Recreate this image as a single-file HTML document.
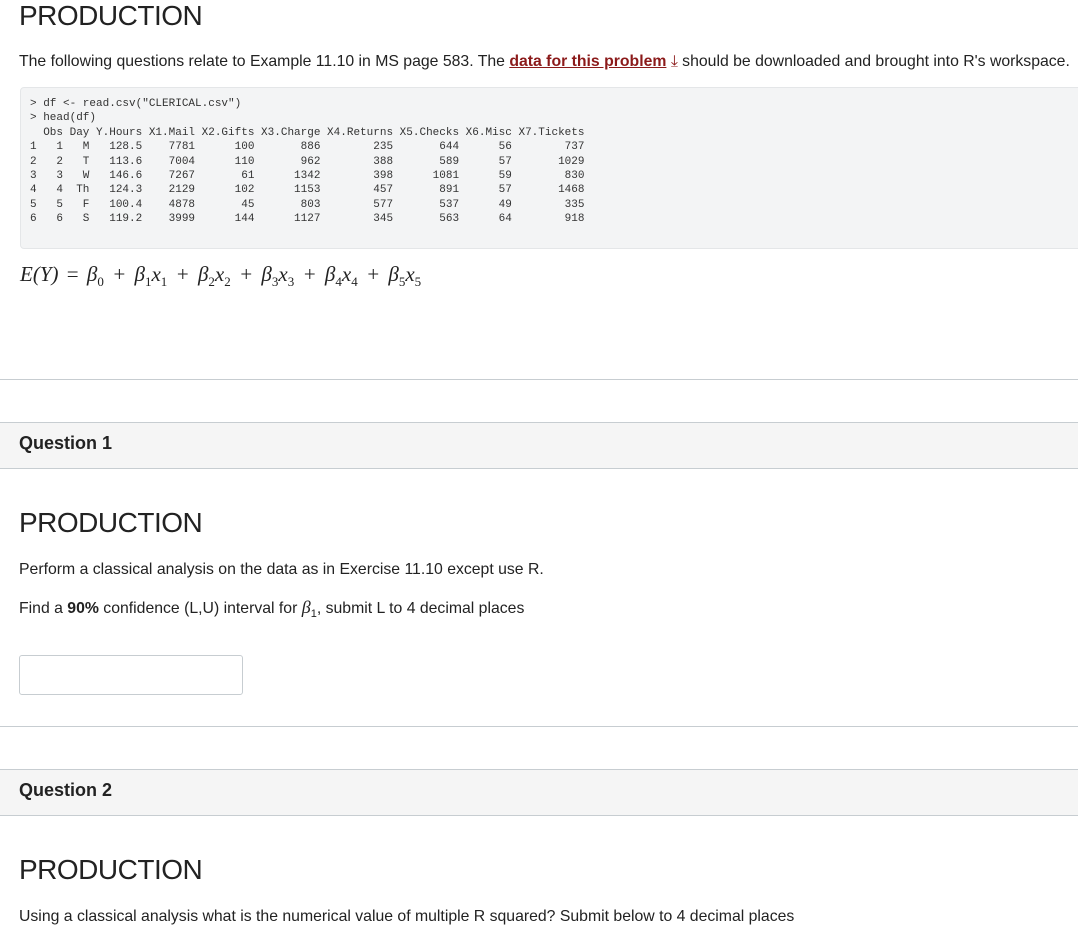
<!DOCTYPE html>
<html><head><meta charset="utf-8"><style>
body{margin:0;width:1078px;height:940px;overflow:hidden;background:#fff;font-family:"Liberation Sans",sans-serif;color:#222;position:relative}
.a{position:absolute;white-space:nowrap}
h1{font-weight:normal;font-size:28px;margin:0;color:#222;letter-spacing:-0.5px}
p{margin:0;font-size:15.8px}
pre{position:absolute;left:20px;top:87px;width:1070px;height:162px;margin:0;background:#f3f4f5;border:1px solid #e4e6e8;border-radius:4px;font-family:"Liberation Mono",monospace;font-size:11px;line-height:14.4px;color:#333;padding:9px 0 0 9px;box-sizing:border-box}
.hr{position:absolute;left:0;width:1078px;border-top:1px solid #c7cdd1}
.band{position:absolute;left:0;width:1078px;height:45px;background:#f5f5f5;border-top:1px solid #c7cdd1;border-bottom:1px solid #c7cdd1}
.band span{position:absolute;left:19px;top:10px;font-size:18px;font-weight:bold;color:#222}
a{color:#8b1a1a;font-weight:bold;text-decoration:underline}
.m{font-family:"Liberation Serif",serif;font-style:italic;font-size:21px;word-spacing:3px}
.m sub{font-size:13px;font-style:normal}
</style></head><body>
<div class="a" style="left:19px;top:0px"><h1>PRODUCTION</h1></div>
<div class="a" style="left:19px;top:53px"><p>The following questions relate to Example 11.10 in MS page 583. The <a>data for this problem</a> <span style="color:#8b1a1a">⤓</span> should be downloaded and brought into R's workspace.</p></div>
<pre>&gt; df &lt;- read.csv("CLERICAL.csv")
&gt; head(df)
  Obs Day Y.Hours X1.Mail X2.Gifts X3.Charge X4.Returns X5.Checks X6.Misc X7.Tickets
1   1   M   128.5    7781      100       886        235       644      56        737
2   2   T   113.6    7004      110       962        388       589      57       1029
3   3   W   146.6    7267       61      1342        398      1081      59        830
4   4  Th   124.3    2129      102      1153        457       891      57       1468
5   5   F   100.4    4878       45       803        577       537      49        335
6   6   S   119.2    3999      144      1127        345       563      64        918</pre>
<div class="a m" style="left:20px;top:262px">E(Y) <span style="font-style:normal">=</span> β<sub>0</sub> + β<sub>1</sub>x<sub>1</sub> + β<sub>2</sub>x<sub>2</sub> + β<sub>3</sub>x<sub>3</sub> + β<sub>4</sub>x<sub>4</sub> + β<sub>5</sub>x<sub>5</sub></div>
<div class="hr" style="top:379px"></div>
<div class="band" style="top:422px"><span>Question 1</span></div>
<div class="a" style="left:19px;top:507px"><h1>PRODUCTION</h1></div>
<div class="a" style="left:19px;top:561px"><p>Perform a classical analysis on the data as in Exercise 11.10 except use R.</p></div>
<div class="a" style="left:19px;top:597px"><p>Find a <b>90%</b> confidence (L,U) interval for <span class="m" style="font-size:18px">β</span><sub style="font-size:11px">1</sub>, submit L to 4 decimal places</p></div>
<div class="a" style="left:19px;top:655px;width:222px;height:38px;border:1px solid #c7cdd1;border-radius:3px"></div>
<div class="hr" style="top:726px"></div>
<div class="band" style="top:769px"><span>Question 2</span></div>
<div class="a" style="left:19px;top:854px"><h1>PRODUCTION</h1></div>
<div class="a" style="left:19px;top:908px"><p>Using a classical analysis what is the numerical value of multiple R squared? Submit below to 4 decimal places</p></div>
</body></html>
